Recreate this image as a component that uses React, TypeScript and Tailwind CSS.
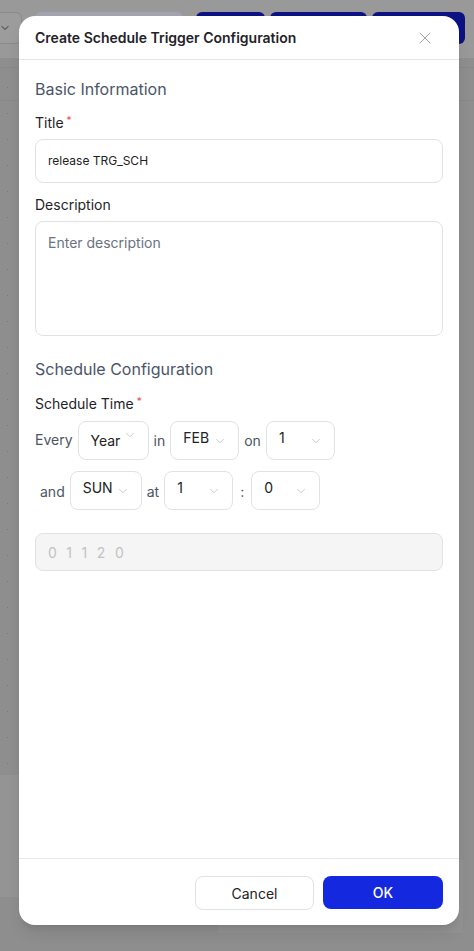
import { ChevronDown, X } from "lucide-react";
import type { ReactNode } from "react";

const font = { fontFamily: "Inter, 'Noto Sans', sans-serif" };

function Label({ children, required = false, className = "" }: { children: ReactNode; required?: boolean; className?: string }) {
  return (
    <div className={"flex items-start text-[14px] leading-5 text-[#1f2328] " + className}>
      <span>{children}</span>
      {required ? <span className="ml-[3px] -mt-[3px] text-[10px] text-[#ef4444]">*</span> : null}
    </div>
  );
}

function MiniSelect({
  value,
  width,
  textUp = false,
  chevronUp = false,
}: {
  value: string;
  width: string;
  textUp?: boolean;
  chevronUp?: boolean;
}) {
  return (
    <div
      className={
        "flex h-[39px] items-center justify-between rounded-lg border border-[#e2e2e2] bg-white pl-[12px] pr-[11px] text-[14px] text-[#222] " +
        width
      }
    >
      <span className={textUp ? "-mt-[6px]" : ""}>{value}</span>
      <ChevronDown
        size={14}
        strokeWidth={1.2}
        className={"text-[#b5b5b5] " + (chevronUp ? "-mt-[12px]" : "")}
      />
    </div>
  );
}

function Word({ children, className = "" }: { children: ReactNode; className?: string }) {
  return <span className={"text-[14px] text-[#4b5563] " + className}>{children}</span>;
}

export default function App() {
  return (
    <div className="relative h-[951px] w-full overflow-hidden bg-[#8e8e8e]" style={font}>
      {/* page behind the dialog */}
      <div className="flex h-[58px] items-start gap-[13px] bg-[#999999] pt-[12px]">
        <div className="-ml-[20px] flex h-[32px] w-[42px] items-center justify-end rounded-md border border-[#8a8a8a] bg-[#9c9c9c] pr-[10px]">
          <ChevronDown size={12} strokeWidth={2} className="text-[#333]" />
        </div>
        <div className="h-[32px] w-[148px] rounded-md bg-[#a1a4ae]" />
        <div className="flex gap-[5px]">
          <div className="h-[32px] w-[69px] rounded-md bg-[#0c1282]" />
          <div className="h-[32px] w-[97px] rounded-md bg-[#0c1282]" />
          <div className="h-[32px] w-[93px] rounded-md bg-[#0c1282]" />
        </div>
      </div>
      <div className="ml-auto mt-[9px] h-px w-full bg-[#888]" />
      <div className="mt-[32px] h-px w-full bg-[#888]" />
      <div className="absolute left-[7px] top-[87px] flex flex-col gap-[25px]">
        {Array.from({ length: 27 }).map((_, i) => (
          <div key={i} className="h-px w-px bg-[#777]" />
        ))}
      </div>
      <div className="absolute left-0 top-[775px] h-[122px] w-[30px] bg-[#949494]" />
      <div className="absolute left-[218px] top-[860px] h-[73px] w-[245px] bg-[#929292]" />

      {/* dialog */}
      <div className="absolute left-[19px] top-[16px] flex h-[909px] w-[440px] flex-col rounded-2xl bg-white shadow-lg">
        <div className="flex h-[44px] items-center justify-between border-b border-[#e5e7eb] pl-[16px] pr-[24px]">
          <h1 className="text-[14px] font-semibold text-[#1f2328]">Create Schedule Trigger Configuration</h1>
          <X size={20} strokeWidth={1.1} className="text-[#9a9a9a]" />
        </div>

        <div className="flex flex-1 flex-col px-[16px] pt-[17px]">
          <h2 className="text-[16px] leading-6 text-[#4a5568]">Basic Information</h2>

          <Label required className="mt-[12px]">Title</Label>
          <div className="mt-[6px] flex h-[44px] items-center rounded-lg border border-[#e2e2e2] px-[12px] text-[12px] text-[#222]">
            release TRG_SCH
          </div>

          <Label className="mt-[12px]">Description</Label>
          <div className="mt-[6px] h-[115px] rounded-lg border border-[#e2e2e2] px-[12px] pt-[10px] text-[14px] text-[#6b7280]">
            Enter description
          </div>

          <h2 className="mt-[21px] text-[16px] leading-6 text-[#4a5568]">Schedule Configuration</h2>

          <Label required className="mt-[13px]">Schedule Time</Label>

          <div className="mt-[7px] flex items-center gap-[5px]">
            <Word className="-mt-[2px]">Every</Word>
            <MiniSelect value="Year" width="w-[71px]" chevronUp />
            <Word>in</Word>
            <MiniSelect value="FEB" width="w-[69px]" textUp />
            <Word>on</Word>
            <MiniSelect value="1" width="w-[69px]" textUp />
          </div>

          <div className="mt-[11px] flex items-center gap-[5px] pl-[5px]">
            <Word className="mt-[2px]">and</Word>
            <MiniSelect value="SUN" width="w-[72px]" textUp />
            <Word className="mt-[2px]">at</Word>
            <MiniSelect value="1" width="w-[69px]" textUp />
            <Word className="mx-[2px] mt-[2px]">:</Word>
            <MiniSelect value="0" width="w-[69px]" textUp />
          </div>

          <div className="mt-[23px] flex h-[38px] items-center rounded-lg border border-[#e2e2e2] bg-[#f5f5f5] px-[12px] text-[14px] tracking-[0.2em] text-[#c2c2c2]">
            0 1 1 2 0
          </div>
        </div>

        <div className="flex h-[67px] items-start justify-end gap-[9px] border-t border-[#e5e7eb] px-[16px] pt-[17px]">
          <button className="h-[34px] w-[119px] rounded-lg border border-[#e2e2e2] bg-white text-[14px] text-[#222]">
            Cancel
          </button>
          <button className="h-[33px] w-[120px] rounded-lg bg-[#1428e0] text-[14px] font-medium text-white">
            OK
          </button>
        </div>
      </div>
    </div>
  );
}
